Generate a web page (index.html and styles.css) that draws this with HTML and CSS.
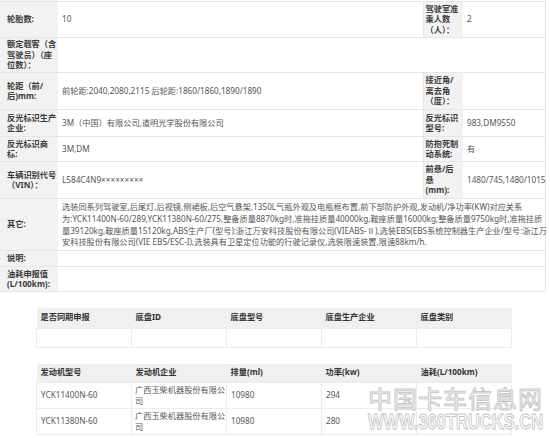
FILE: index.html
```html
<!DOCTYPE html>
<html lang="zh-CN">
<head>
<meta charset="utf-8">
<title>车辆参数</title>
<link rel="stylesheet" href="styles.css">
</head>
<body>
<div class="page">
  <table class="spec">
    <colgroup>
      <col class="c-l1"><col class="c-v1"><col class="c-l2"><col class="c-v2">
    </colgroup>
    <tr class="cut"><td class="lbl"></td><td colspan="3"></td></tr>
    <tr class="r36">
      <td class="lbl">轮胎数:</td>
      <td class="val">10</td>
      <td class="lbl lbl2">驾驶室准<br>乘人数<br>（人）：</td>
      <td class="val">2</td>
    </tr>
    <tr class="r35">
      <td class="lbl">额定载客（含<br>驾驶员）（座<br>位数）：</td>
      <td class="val" colspan="3"></td>
    </tr>
    <tr class="r37">
      <td class="lbl">轮距（前/<br>后)mm:</td>
      <td class="val">前轮距:2040,2080,2115 后轮距:1860/1860,1890/1890</td>
      <td class="lbl lbl2">接近角/<br>离去角<br>（度）：</td>
      <td class="val"></td>
    </tr>
    <tr class="r27">
      <td class="lbl">反光标识生产<br>企业:</td>
      <td class="val">3M（中国）有限公司,道明光学股份有限公司</td>
      <td class="lbl lbl2">反光标识<br>型号:</td>
      <td class="val">983,DM9550</td>
    </tr>
    <tr class="r25">
      <td class="lbl">反光标识商<br>标:</td>
      <td class="val">3M,DM</td>
      <td class="lbl lbl2">防抱死制<br>动系统:</td>
      <td class="val">有</td>
    </tr>
    <tr class="r37">
      <td class="lbl">车辆识别代号<br>（VIN）：</td>
      <td class="val">L584C4N9×××××××××</td>
      <td class="lbl lbl2">前悬/后<br>悬<br>(mm):</td>
      <td class="val">1480/745,1480/1015</td>
    </tr>
    <tr class="r52">
      <td class="lbl">其它:</td>
      <td class="val other" colspan="3"><span class="ln">选装同系列驾驶室,后尾灯,后视镜,侧裙板,后空气悬架,1350L气瓶外观及电瓶框布置,前下部防护外观,发动机/净功率(KW)对应关系</span><span class="ln">为:YCK11400N-60/289,YCK11380N-60/275,整备质量8870kg时,准拖挂质量40000kg,鞍座质量16000kg;整备质量9750kg时,准拖挂质</span><span class="ln">量39120kg,鞍座质量15120kg,ABS生产厂(型号):浙江万安科技股份有限公司(VIEABS-Ⅱ),选装EBS(EBS系统控制器生产企业/型号:浙江万</span><span class="ln">安科技股份有限公司(VIE EBS/ESC-I),选装具有卫星定位功能的行驶记录仪,选装限速装置,限速88km/h.</span></td>
    </tr>
    <tr class="r16">
      <td class="lbl">说明:</td>
      <td class="val" colspan="3"></td>
    </tr>
    <tr class="r25">
      <td class="lbl">油耗申报值<br>(L/100km):</td>
      <td class="val" colspan="3"></td>
    </tr>
  </table>

  <table class="grid chassis">
    <tr class="head r20">
      <th>是否同期申报</th><th>底盘ID</th><th>底盘型号</th><th>底盘生产企业</th><th>底盘类别</th>
    </tr>
    <tr class="r19">
      <td></td><td></td><td></td><td></td><td></td>
    </tr>
  </table>

  <table class="grid engine">
    <tr class="head r19">
      <th>发动机型号</th><th>发动机企业</th><th>排量(ml)</th><th>功率(kw)</th><th>油耗(L/100km)</th>
    </tr>
    <tr class="r26">
      <td>YCK11400N-60</td><td>广西玉柴机器股份有限公<br>司</td><td>10980</td><td>294</td><td></td>
    </tr>
    <tr class="r26">
      <td>YCK11380N-60</td><td>广西玉柴机器股份有限公<br>司</td><td>10980</td><td>280</td><td></td>
    </tr>
  </table>

  <div class="watermark">
    <span class="wm-cn">中国卡车信息网</span>
    <span class="wm-en">WWW.360TRUCKS.CN</span>
  </div>
</div>
</body>
</html>
```
FILE: styles.css
```css
html, body {
  margin: 0;
  padding: 0;
  background: #ffffff;
}
body {
  font-family: "Noto Sans", "Noto Sans CJK SC", sans-serif;
  font-size: 8.2px;
  color: #555555;
}
.page {
  position: relative;
  width: 550px;
  height: 438px;
  overflow: hidden;
}
table {
  border-collapse: collapse;
  table-layout: fixed;
}
.spec {
  width: 545px;
}
.c-l1 { width: 58px; }
.c-v1 { width: 365px; }
.c-l2 { width: 40px; }
.c-v2 { width: 82px; }

.r16 { height: 16px; }
.r19 { height: 19px; }
.r20 { height: 20px; }
.r25 { height: 25px; }
.r26 { height: 26px; }
.r27 { height: 27px; }
.r35 { height: 35px; }
.r36 { height: 36px; }
.r37 { height: 37px; }
.r52 { height: 52px; }

.spec td {
  border-top: 1px solid #e6e6e6;
  border-bottom: 1px solid #e6e6e6;
  border-right: 1px solid #e6e6e6;
  padding: 0 2px 0 4px;
  line-height: 10.4px;
  vertical-align: middle;
  white-space: nowrap;
}
.spec tr.cut td {
  border-top: none;
  padding: 0;
  height: 1px;
  line-height: 1px;
}
.spec td.lbl {
  background: #f2f2f2;
  color: #3a3a3a;
  font-weight: bold;
  padding-left: 7px;
  border-right: none;
}
.spec td.lbl2 {
  padding-left: 2px;
}
.spec td.other {
  line-height: 11.6px;
}
.ln {
  display: block;
}

.grid {
  margin-left: 36px;
  margin-top: 16px;
  width: 476px;
}
.grid th, .grid td {
  width: 20%;
  text-align: left;
  line-height: 10.6px;
  padding: 0 0 0 4px;
  vertical-align: middle;
}
.grid tr.head th {
  background: #f0f0f0;
  color: #333333;
  font-weight: bold;
  border: none;
}
.grid td {
  border: 1px solid #ececec;
}
.grid td:nth-child(2) {
  padding-left: 3px;
}

.watermark {
  position: absolute;
  left: 368px;
  top: 384px;
  width: 182px;
  display: flex;
  flex-direction: column;
  align-items: flex-start;
  pointer-events: none;
}
.wm-cn {
  font-family: "Noto Sans CJK SC", sans-serif;
  font-size: 24px;
  line-height: 28px;
  letter-spacing: 1px;
  color: rgba(255, 255, 255, 0.5);
  -webkit-text-stroke: 1px #c8c8c8;
}
.wm-en {
  font-family: "Liberation Sans", sans-serif;
  font-weight: bold;
  font-size: 22px;
  line-height: 20px;
  color: rgba(255, 255, 255, 0.5);
  -webkit-text-stroke: 1px #c4c4c4;
  transform: scaleX(0.75);
  transform-origin: left center;
  white-space: nowrap;
}
```
